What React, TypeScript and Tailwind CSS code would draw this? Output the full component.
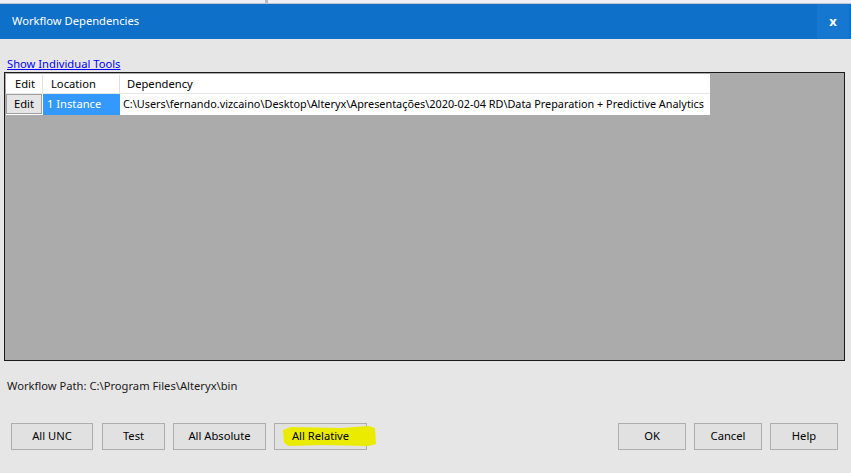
import React from "react";

const Btn = ({ label, w, children }: { label: string; w: string; children?: React.ReactNode }) => (
  <div
    className={`relative ${w} h-[27px] border border-[#adadad] bg-[#e1e1e1] flex items-center justify-center text-black`}
  >
    {children}
    <span className="relative">{label}</span>
  </div>
);

export default function App() {
  return (
    <div
      className="w-[851px] h-[473px] bg-[#e6e6e6] flex flex-col overflow-hidden text-[11.2px] text-black"
      style={{ fontFamily: '"Noto Sans", "Open Sans", sans-serif' }}
    >
      {/* top strip */}
      <div className="h-[3px] bg-[#eef0f5] flex">
        <div className="ml-[265px] w-[3px] bg-[#b9bdc9]" />
      </div>
      <div className="h-[1px] bg-[#c3c6cc]" />
      {/* title bar */}
      <div className="h-[35px] bg-[#0e70c8] flex items-center justify-between">
        <span className="pl-[12px] text-white">Workflow Dependencies</span>
        <div className="w-[32px] h-full mr-[2px] bg-[#1677d0] flex items-center justify-center text-white font-bold text-[13px]">
          x
        </div>
      </div>
      {/* body */}
      <div className="flex-1 flex flex-col">
        <div className="pl-[7px] pt-[17px] h-[33px] leading-[16px]">
          <span className="text-[#0000ff] underline">Show Individual Tools</span>
        </div>
        <div className="ml-[4px] w-[841px] h-[289px] border border-[#1a1a1a] bg-[#ababab] p-[1px]">
          <div className="w-[704px] flex flex-col">
            <div className="h-[20px] bg-white flex border-b border-[#e6e6e6] pt-[1px]">
              <div className="w-[37px] pl-[9px] flex items-center border-r border-[#e0e0e0]">Edit</div>
              <div className="w-[77px] pl-[8px] flex items-center border-r border-[#e0e0e0]">Location</div>
              <div className="flex-1 pl-[7px] flex items-center">Dependency</div>
            </div>
            <div className="h-[21px] flex">
              <div className="w-[37px] bg-white flex">
                <div className="w-[36px] h-[20px] border border-[#a0a0a0] bg-[#e5e5e5] flex items-center justify-center">
                  Edit
                </div>
              </div>
              <div className="w-[77px] bg-[#3399ff] text-white pl-[4px] flex items-center">1 Instance</div>
              <div className="flex-1 bg-white pl-[3px] flex items-center whitespace-nowrap overflow-hidden text-[10.85px]">
                C:\Users\fernando.vizcaino\Desktop\Alteryx\Apresentações\2020-02-04 RD\Data Preparation + Predictive Analytics
              </div>
            </div>
          </div>
        </div>
        <div className="pl-[7px] pt-[17px] h-[62px] text-[#1a1a1a]">Workflow Path: C:\Program Files\Alteryx\bin</div>
        <div className="flex pl-[11px] pr-[13px] justify-between">
          <div className="flex gap-[8px]">
            <div className="mr-[1px]">
              <Btn label="All UNC" w="w-[82px]" />
            </div>
            <Btn label="Test" w="w-[63px]" />
            <Btn label="All Absolute" w="w-[93px]" />
            <Btn label="All Relative" w="w-[93px]">
              <svg className="absolute left-[6px] top-[1px]" width="96" height="22" viewBox="0 0 96 22">
                <path
                  d="M2 5 L10 2 L60 3 L88 1 L94 3 L95 19 L88 21 L40 20 L8 21 L3 18 Z"
                  fill="#ebeb00"
                />
              </svg>
            </Btn>
          </div>
          <div className="flex gap-[8px]">
            <Btn label="OK" w="w-[68px]" />
            <Btn label="Cancel" w="w-[68px]" />
            <Btn label="Help" w="w-[68px]" />
          </div>
        </div>
      </div>
    </div>
  );
}
